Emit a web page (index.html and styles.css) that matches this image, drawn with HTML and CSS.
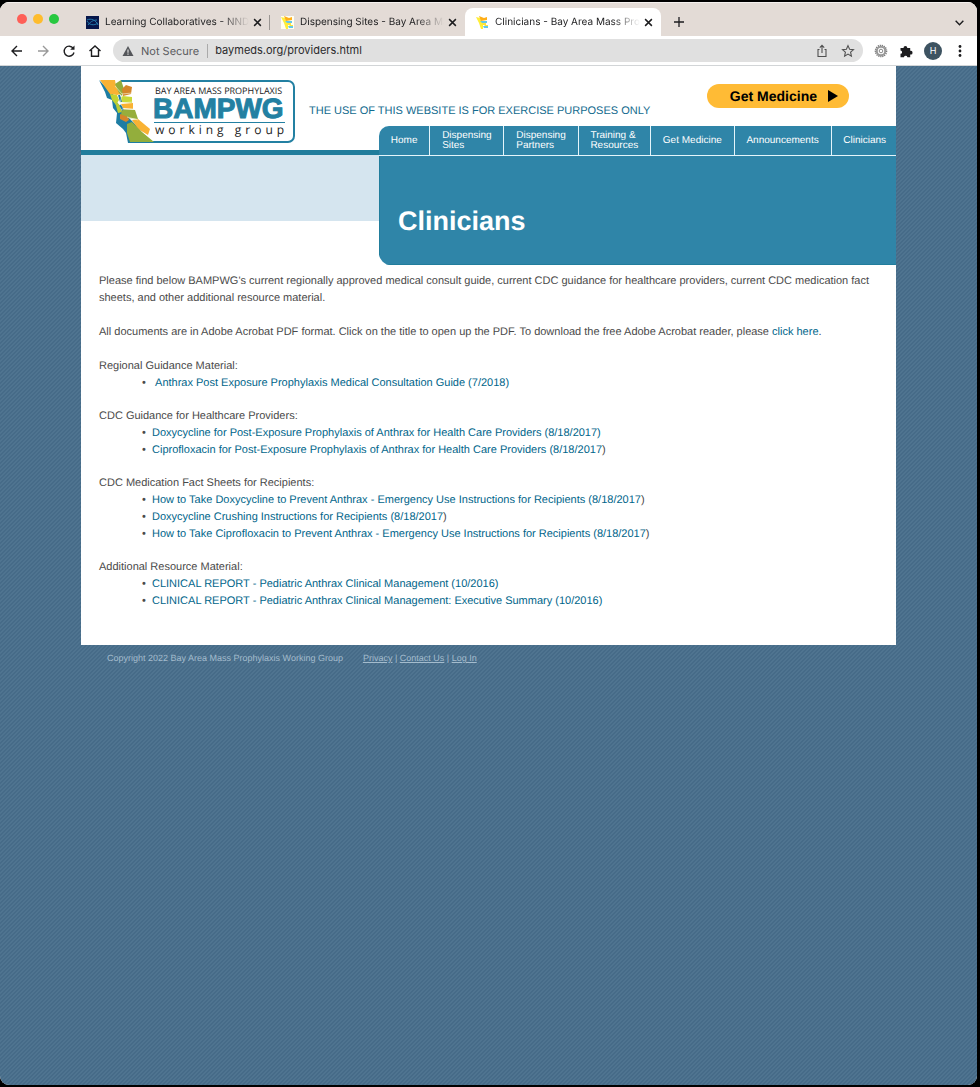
FILE: index.html
```html
<!DOCTYPE html>
<html lang="en">
<head>
  <meta charset="UTF-8">
  <meta name="viewport" content="width=device-width, initial-scale=1.0">
  <title>Clinicians - Bay Area Mass Prophylaxis Working Group</title>
  <link rel="stylesheet" href="styles.css">
</head>
<body>
  <div class="window">
    <div class="tab-strip">
      <div class="lights">
        <span class="light red"></span>
        <span class="light yellow"></span>
        <span class="light green"></span>
      </div>
      <div class="tab divided">
        <svg class="favicon" viewBox="0 0 13 13"><rect width="13" height="13" fill="#06164a"/><path d="M1 4c4-2 9 0 11 5M1 5c2 4 7 5 11 2M2 9c3-4 6-5 9-5" fill="none" stroke="#2478ac" stroke-width="1"/></svg>
        <span class="tab-title">Learning Collaboratives - NND</span>
        <button class="close" aria-label="Close tab"><svg viewBox="0 0 8 8"><path d="M1 1l6 6M7 1l-6 6"/></svg></button>
      </div>
      <div class="tab">
        <svg class="favicon" viewBox="0 0 13 13"><rect width="13" height="13" fill="#fffef0"/><path d="M0 1l4 1 3 5v6H5L3 7z" fill="#ffee38"/><path d="M3 0l5 2 3-1v3L5 5z" fill="#ffae18"/><path d="M4 5h7v2H6zM7 10h5v2H8z" fill="#62c8ea"/><path d="M6 7h4v2H7zM8 9h4v1H9z" fill="#ffe23a"/></svg>
        <span class="tab-title">Dispensing Sites - Bay Area Ma</span>
        <button class="close" aria-label="Close tab"><svg viewBox="0 0 8 8"><path d="M1 1l6 6M7 1l-6 6"/></svg></button>
      </div>
      <div class="tab active">
        <svg class="favicon" viewBox="0 0 13 13"><path d="M0 1l4 1 3 5v6H5L3 7z" fill="#ffee38"/><path d="M3 0l5 2 3-1v3L5 5z" fill="#ffae18"/><path d="M4 5h7v2H6zM7 10h5v2H8z" fill="#62c8ea"/><path d="M6 7h4v2H7zM8 9h4v1H9z" fill="#ffe23a"/></svg>
        <span class="tab-title">Clinicians - Bay Area Mass Pro</span>
        <button class="close" aria-label="Close tab"><svg viewBox="0 0 8 8"><path d="M1 1l6 6M7 1l-6 6"/></svg></button>
      </div>
      <button class="new-tab" aria-label="New tab"><svg viewBox="0 0 12 12"><path d="M6 1v10M1 6h10"/></svg></button>
      <button class="tab-search" aria-label="Search tabs"><svg viewBox="0 0 10 10"><path d="M1.500 3.500L5 7l3.500-3.500"/></svg></button>
    </div>

    <div class="toolbar">
      <div class="history">
        <button class="tool" aria-label="Back"><svg viewBox="0 0 14 14"><path d="M12 7H2M7 2L2 7l5 5"/></svg></button>
        <button class="tool off" aria-label="Forward"><svg viewBox="0 0 14 14"><path d="M2 7h10M7 2l5 5-5 5"/></svg></button>
        <button class="tool" aria-label="Reload"><svg viewBox="0 0 14 14"><path d="M11.200 4.200A5 5 0 1 0 12 8.500"/><path d="M12.500 1.500v4.300H8.200z" fill="#1d1d1f" stroke="none"/></svg></button>
        <button class="tool" aria-label="Home"><svg viewBox="0 0 14 14"><path d="M1.500 7L7 2l5.500 5M3.500 6v6.200h7V6"/></svg></button>
      </div>
      <div class="address">
        <svg class="warning" viewBox="0 0 12 12"><path d="M6 1l5.500 10H.5z" fill="#54565a"/><path d="M6 4.500v3.200M6 8.600v1.200" stroke="#e0e0e0" stroke-width="1.200"/></svg>
        <label class="security" for="url">Not Secure</label>
        <input class="url" id="url" type="text" value="baymeds.org/providers.html">
        <button class="tool soft" aria-label="Share"><svg viewBox="0 0 14 14"><path d="M4.500 5.500H3v7h8v-7H9.500M7 9V1.500M4.800 3.600L7 1.400l2.200 2.200"/></svg></button>
        <button class="tool soft" aria-label="Bookmark this page"><svg viewBox="0 0 14 14"><path d="M7 1.600l1.600 3.600 3.900.4-2.900 2.600.8 3.900L7 10.100l-3.400 2 .8-3.900-2.900-2.600 3.900-.4z"/></svg></button>
      </div>
      <button class="tool" aria-label="Extension"><svg viewBox="0 0 14 14"><circle cx="7" cy="7" r="5.500" stroke="#777" stroke-width="1.600" stroke-dasharray="1.200 .8"/><circle cx="7" cy="7" r="4.200" stroke="#999" stroke-width="2"/><circle cx="7" cy="7" r="1.800" stroke="#888" stroke-width="1"/></svg></button>
      <button class="tool" aria-label="Extensions"><svg viewBox="0 0 14 14"><path d="M1.500 4h3a1.900 1.900 0 1 1 3.800 0h2.900v2.800a1.900 1.900 0 1 1 0 3.700v2.700H8.400a1.800 1.800 0 0 0-3.500 0H1.500V9.800a1.600 1.600 0 0 0 0-3.200z" fill="#1d1d1f" stroke="none"/></svg></button>
      <button class="avatar" aria-label="Profile">H</button>
      <button class="tool menu" aria-label="Menu"><svg viewBox="0 0 14 14"><circle cx="7" cy="2.500" r="1.400"/><circle cx="7" cy="7" r="1.400"/><circle cx="7" cy="11.500" r="1.400"/></svg></button>
    </div>

    <div class="page">
      <div class="site">
        <header class="header">
          <a class="logo" href="#" aria-label="Bay Area Mass Prophylaxis Working Group">
            <svg width="198" height="66" viewBox="0 0 198 66">
              <path d="M22 2h167a6 6 0 0 1 6 6v49a6 6 0 0 1-6 6H50" fill="none" stroke="#2380a2" stroke-width="2"/>
              <path d="M0 1l6 12 2 6 5 2 1 8 4 5-1 10 7 6 3 4 2 10h22L36 45 22 31 14 15z" fill="#1e7da3"/>
              <path d="M1 1h15l1 6 5 8-4 1-7-1-5-7z" fill="#f9b233"/>
              <path d="M16 5l6-4 3 9-2 7-3-3z" fill="#93ac3b"/>
              <path d="M23 10l4-4 6 2-1 7-8 2z" fill="#d5862a"/>
              <path d="M11 15l7 1 2 5-3 5-4-5z" fill="#c3d431"/>
              <path d="M20 19l4-2 9 1v6l-11-1z" fill="#c8d938"/>
              <path d="M22 25l12-1v6l-10-1z" fill="#f9b233"/>
              <path d="M16 23l4 2 3 8-4 1z" fill="#b9cd34"/>
              <path d="M23 30l13 1 3 9-10-1-7-3z" fill="#97ae3c"/>
              <path d="M21 35l8 3 1 3-3 2-6-3z" fill="#d5862a"/>
              <path d="M33 41l6-1 12 10-2 6-10-6z" fill="#f9b233"/>
              <path d="M28 45l5-2 10 10 12 10H31l-3-9z" fill="#93ae3c"/>
              <path d="M20 16l2 7M21 26l3 5" stroke="#1e7da3" stroke-width="2"/>
              <path d="M16 7l7 8 10-1M23 17l-2 7 13-1M23 30h11M28 38l11 3" fill="none" stroke="#f4f5dc" stroke-width=".6"/>
              <text class="logo-small" x="56" y="15">BAY AREA MASS PROPHYLAXIS</text>
              <text class="logo-big" x="54" y="39">BAMPWG</text>
              <path d="M55 43.500h131" stroke="#2380a2" stroke-width="1"/>
              <text class="logo-wide" x="56" y="55">working group</text>
            </svg>
          </a>
          <p class="notice">THE USE OF THIS WEBSITE IS FOR EXERCISE PURPOSES ONLY</p>
          <a class="get-medicine" href="#">Get Medicine <svg viewBox="0 0 10 12"><path d="M0 0l10 6-10 6z"/></svg></a>
        </header>

        <div class="banner">
          <div class="banner-side"></div>
          <div class="banner-main">
            <nav class="nav">
              <a href="#">Home</a>
              <a href="#">Dispensing<br>Sites</a>
              <a href="#">Dispensing<br>Partners</a>
              <a href="#">Training &amp;<br>Resources</a>
              <a href="#">Get Medicine</a>
              <a href="#">Announcements</a>
              <a href="#">Clinicians</a>
            </nav>
            <div class="hero">
              <h1>Clinicians</h1>
            </div>
          </div>
        </div>

        <main class="content">
          <p>Please find below BAMPWG's current regionally approved medical consult guide, current CDC guidance for healthcare providers, current CDC medication fact sheets, and other additional resource material.</p>
          <p>All documents are in Adobe Acrobat PDF format. Click on the title to open up the PDF. To download the free Adobe Acrobat reader, please <a href="#">click here</a>.</p>

          <h2>Regional Guidance Material:</h2>
          <ul>
            <li>&nbsp;<a href="#">Anthrax Post Exposure Prophylaxis Medical Consultation Guide (7/2018)</a></li>
          </ul>

          <h2>CDC Guidance for Healthcare Providers:</h2>
          <ul>
            <li><a href="#">Doxycycline for Post-Exposure Prophylaxis of Anthrax for Health Care Providers (8/18/2017)</a></li>
            <li><a href="#">Ciprofloxacin for Post-Exposure Prophylaxis of Anthrax for Health Care Providers (8/18/2017</a>)</li>
          </ul>

          <h2>CDC Medication Fact Sheets for Recipients:</h2>
          <ul>
            <li><a href="#">How to Take Doxycycline to Prevent Anthrax - Emergency Use Instructions for Recipients (8/18/2017</a>)</li>
            <li><a href="#">Doxycycline Crushing Instructions for Recipients (8/18/2017</a>)</li>
            <li><a href="#">How to Take Ciprofloxacin to Prevent Anthrax - Emergency Use Instructions for Recipients (8/18/2017</a>)</li>
          </ul>

          <h2>Additional Resource Material:</h2>
          <ul>
            <li><a href="#">CLINICAL REPORT - Pediatric Anthrax Clinical Management (10/2016)</a></li>
            <li><a href="#">CLINICAL REPORT - Pediatric Anthrax Clinical Management: Executive Summary (10/2016)</a></li>
          </ul>
        </main>
      </div>

      <footer class="footer">
        <span>Copyright 2022 Bay Area Mass Prophylaxis Working Group</span>
        <span><a href="#">Privacy</a> | <a href="#">Contact Us</a> | <a href="#">Log In</a></span>
      </footer>
    </div>
  </div>
</body>
</html>
```

FILE: styles.css
```css
:root {
  --teal: #2f85a8;
  --teal-dark: #217d9c;
  --link: #00658a;
  --strip: #e3dbd6;
  --ink: #1d1d1f;
}

* {
  box-sizing: border-box;
}

body {
  margin: 0;
  padding: 2px 3px 2px 0;
  background: #000;
  font-family: "Liberation Sans", Arial, sans-serif;
  font-size: 11px;
  line-height: 17px;
  text-rendering: geometricPrecision;
  color: #4a4a4a;
}

button {
  display: flex;
  align-items: center;
  justify-content: center;
  flex: none;
  margin: 0;
  padding: 0;
  border: 0;
  background: none;
  cursor: pointer;
}

p,
h1,
h2,
ul {
  margin: 0;
}

/* Browser window */
.window {
  display: flex;
  flex-direction: column;
  min-height: calc(100vh - 4px);
  border-radius: 9px;
  overflow: hidden;
  background: #fff;
}

.tab-strip {
  display: flex;
  align-items: flex-end;
  height: 34px;
  background: var(--strip);
  border-top: 1px solid #f4f0ee;
}

.lights {
  display: flex;
  gap: 6px;
  padding: 0 16px 12px 17px;
}

.light {
  width: 10px;
  height: 10px;
  border-radius: 50%;
}

.red { background: #fe5f57; }
.yellow { background: #febc2e; }
.green { background: #28c840; }

.tab {
  display: flex;
  align-items: center;
  flex: 0 1 195px;
  min-width: 0;
  height: 28px;
  padding: 0 8px 0 11px;
  font-family: Inter, sans-serif;
  font-size: 10px;
  color: var(--ink);
}

.divided {
  background: linear-gradient(#9b9693, #9b9693) no-repeat right center / 1px 15px;
}

.active {
  flex-basis: 196px;
  border-radius: 8px 8px 0 0;
  background: #fff;
}

.favicon {
  flex: none;
  width: 13px;
  height: 13px;
  margin-right: 6px;
}

.tab-title {
  flex: 1;
  min-width: 0;
  margin-right: 4px;
  overflow: hidden;
  white-space: nowrap;
  -webkit-mask-image: linear-gradient(90deg, #000 calc(100% - 28px), transparent);
  mask-image: linear-gradient(90deg, #000 calc(100% - 28px), transparent);
}

.close svg {
  width: 9px;
  height: 9px;
}

.close,
.new-tab,
.tab-search {
  stroke: var(--ink);
  stroke-width: 1.3;
  fill: none;
}

.new-tab {
  width: 35px;
  height: 28px;
}

.new-tab svg {
  width: 12px;
  height: 12px;
}

.tab-search {
  width: 35px;
  height: 28px;
  margin-left: auto;
}

.tab-search svg {
  width: 11px;
  height: 11px;
}

.toolbar {
  display: flex;
  align-items: center;
  gap: 11px;
  height: 30px;
  padding: 0 10px;
  background: #fff;
  border-bottom: 1px solid #d2d5d7;
}

.history {
  display: flex;
  gap: 12px;
}

.tool {
  width: 14px;
  height: 14px;
  fill: none;
  stroke: var(--ink);
  stroke-width: 1.4;
}

.tool svg {
  width: 14px;
  height: 14px;
}

.off {
  stroke: #999;
}

.soft {
  stroke: #505050;
  stroke-width: 1.1;
}

.menu {
  fill: var(--ink);
  stroke: none;
}

.address {
  display: flex;
  align-items: center;
  gap: 12px;
  flex: 1;
  min-width: 0;
  height: 23px;
  padding: 0 8px 0 9px;
  border-radius: 12px;
  background: #e0e0e0;
  font-family: Inter, sans-serif;
}

.warning {
  flex: none;
  width: 12px;
  height: 12px;
  margin-right: -5px;
}

.security {
  padding-right: 8px;
  border-right: 1px solid #aaa;
  line-height: 14px;
  color: #5a5b5e;
  white-space: nowrap;
}

.url {
  flex: 1;
  min-width: 0;
  margin-left: -5px;
  padding: 0;
  border: 0;
  outline: 0;
  background: none;
  font: inherit;
  color: #29292b;
}

.avatar {
  width: 18px;
  height: 18px;
  border-radius: 50%;
  background: #3d5361;
  font: 9px Inter, sans-serif;
  color: #fff;
}

/* Web page */
.page {
  flex: 1;
  background: linear-gradient(135deg, #466b88 25%, #4f7490 25% 50%, #466b88 50% 75%, #4f7490 75%) 0 0 / 4px 4px;
}

.site,
.footer {
  max-width: 815px;
  margin: 0 auto;
}

.site {
  background: #fff;
}

.header {
  display: flex;
  align-items: flex-start;
  gap: 12px;
  height: 60px;
  padding: 13px 47px 0 18px;
}

.logo {
  flex: none;
  height: 66px;
}

.logo-small {
  font: 9px "Open Sans", sans-serif;
  fill: #222;
}

.logo-big {
  font: bold 28px "Liberation Sans", Arial, sans-serif;
  fill: #2380a2;
  stroke: #2380a2;
  stroke-width: 1;
}

.logo-wide {
  font: 12px "Open Sans", sans-serif;
  letter-spacing: 4px;
  fill: #222;
}

.notice {
  margin-top: 24px;
  color: #126a8e;
  white-space: nowrap;
}

.get-medicine {
  display: flex;
  align-items: center;
  gap: 11px;
  height: 24px;
  margin-top: 5px;
  margin-left: auto;
  padding: 0 11px 0 23px;
  border-radius: 12px;
  background: #ffbb35;
  font-size: 14px;
  font-weight: bold;
  color: #000;
  text-decoration: none;
  white-space: nowrap;
}

.get-medicine svg {
  width: 10px;
  height: 12px;
}

.banner {
  display: grid;
  grid-template-columns: 298px 1fr;
}

.banner-side {
  height: 71px;
  margin-top: 24px;
  border-top: 5px solid var(--teal-dark);
  background: #d5e5ef;
}

.banner-main {
  border-radius: 10px 0 0 12px;
  overflow: hidden;
  background: #e4f5fb;
}

.nav {
  display: flex;
  gap: 1px;
  height: 29px;
  margin-bottom: 1px;
}

.nav a {
  display: flex;
  align-items: center;
  justify-content: center;
  flex: 1 0 auto;
  padding: 0 11px;
  background: var(--teal);
  font-size: 10px;
  line-height: 10px;
  color: #fff;
  text-decoration: none;
}

.nav a:last-child {
  padding-right: 9px;
}

.hero {
  height: 109px;
  padding: 50px 18px 0;
  background: var(--teal);
  border-left: 1px solid var(--teal-dark);
  border-bottom: 1px solid var(--teal-dark);
}

.hero h1 {
  font-size: 27px;
  line-height: 30px;
  color: #fff;
}

.content {
  padding: 8px 8px 35px 18px;
}

.content p {
  margin-bottom: 17px;
}

.content h2 {
  font-size: 11px;
  font-weight: normal;
}

.content ul {
  margin-bottom: 16px;
  padding-left: 53px;
  list-style-type: "•\00a0\00a0";
}

.content ul:last-child {
  margin-bottom: 0;
}

.content a {
  color: var(--link);
  text-decoration: none;
}

.content a:hover {
  text-decoration: underline;
}

.footer {
  display: flex;
  gap: 20px;
  padding: 5px 26px;
  font-size: 9px;
  color: #a4bccd;
}

.footer a {
  color: inherit;
}
```
